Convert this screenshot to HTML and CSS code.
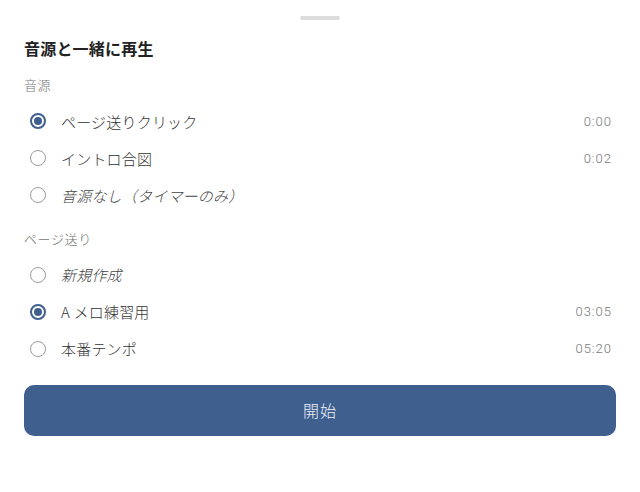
FILE: index.html
```html
<!DOCTYPE html>
<html lang="ja">
<head>
<meta charset="utf-8">
<link rel="stylesheet" href="styles.css">
</head>
<body>
<div class="sheet">
  <div class="handle"></div>
  <h1 class="title">音源と一緒に再生</h1>

  <div class="section-label">音源</div>
  <div class="options">
    <div class="row"><span class="radio checked"></span><span class="label">ページ送りクリック</span><span class="time">0:00</span></div>
    <div class="row"><span class="radio"></span><span class="label">イントロ合図</span><span class="time">0:02</span></div>
    <div class="row"><span class="radio"></span><span class="label italic">音源なし（タイマーのみ）</span></div>
  </div>

  <div class="section-label">ページ送り</div>
  <div class="options">
    <div class="row"><span class="radio"></span><span class="label italic">新規作成</span></div>
    <div class="row"><span class="radio checked"></span><span class="label">A メロ練習用</span><span class="time">03:05</span></div>
    <div class="row"><span class="radio"></span><span class="label">本番テンポ</span><span class="time">05:20</span></div>
  </div>

  <button class="start">開始</button>
</div>
</body>
</html>
```
FILE: styles.css
```css
html, body {
  margin: 0;
  padding: 0;
  background: #ffffff;
}
body {
  font-family: "Noto Sans CJK JP", "Noto Sans", sans-serif;
}
.sheet {
  display: flex;
  flex-direction: column;
  padding: 16px 24px 0;
}
.handle {
  align-self: center;
  width: 40px;
  height: 4px;
  border-radius: 2px;
  background: #dddddd;
}
.title {
  margin: 16px 0 0;
  font-size: 16px;
  line-height: 24px;
  font-weight: 700;
  color: #222222;
  letter-spacing: 0.2px;
}
.section-label {
  margin-top: 16px;
  font-size: 13px;
  line-height: 18px;
  font-weight: 300;
  color: #777777;
  letter-spacing: 0.6px;
}
.options {
  display: flex;
  flex-direction: column;
  margin-top: 8.5px;
}
.row {
  display: flex;
  align-items: center;
  height: 37px;
  padding: 0 4px 0 6px;
}
.radio {
  box-sizing: border-box;
  width: 16px;
  height: 16px;
  border-radius: 50%;
  border: 1.5px solid #9a9a9a;
  display: flex;
  align-items: center;
  justify-content: center;
  flex-shrink: 0;
}
.radio.checked {
  border: 2px solid #3f5f8f;
}
.radio.checked::after {
  content: "";
  width: 8px;
  height: 8px;
  border-radius: 50%;
  background: #3f5f8f;
}
.label {
  margin-left: 15px;
  font-size: 15px;
  font-weight: 300;
  color: #333333;
  letter-spacing: 0.2px;
  flex: 1;
}
.label.italic {
  font-style: italic;
  color: #444444;
}
.time {
  font-size: 13px;
  font-weight: 300;
  color: #777777;
  letter-spacing: 1px;
  font-family: "Roboto", "Noto Sans", sans-serif;
}
.start {
  margin-top: 17.5px;
  height: 51px;
  border: none;
  border-radius: 10px;
  background: #3f5f8f;
  color: #eef2f8;
  font-family: "Noto Sans CJK JP", sans-serif;
  font-size: 16px;
  font-weight: 300;
  letter-spacing: 1px;
}
```
